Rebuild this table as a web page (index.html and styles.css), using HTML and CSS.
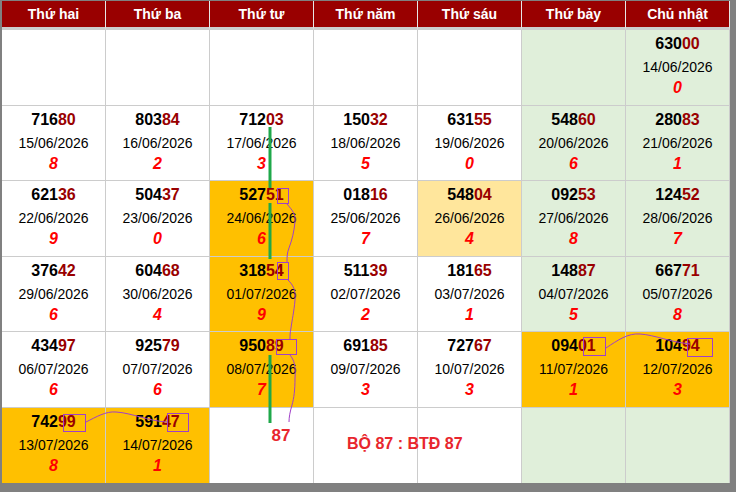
FILE: index.html
```html
<!DOCTYPE html>
<html lang="vi">
<head>
<meta charset="utf-8">
<title>Bảng kết quả</title>
<link rel="stylesheet" href="styles.css">
</head>
<body>
<div class="page">
  <div class="cal">
    <div class="hd">Thứ hai</div>
    <div class="hd">Thứ ba</div>
    <div class="hd">Thứ tư</div>
    <div class="hd">Thứ năm</div>
    <div class="hd">Thứ sáu</div>
    <div class="hd">Thứ bảy</div>
    <div class="hd">Chủ nhật</div>

    <div class="c"></div>
    <div class="c"></div>
    <div class="c"></div>
    <div class="c"></div>
    <div class="c"></div>
    <div class="c g"></div>
    <div class="c g"><div class="n">630<b>00</b></div><div class="d">14/06/2026</div><div class="k">0</div></div>

    <div class="c"><div class="n">716<b>80</b></div><div class="d">15/06/2026</div><div class="k">8</div></div>
    <div class="c"><div class="n">803<b>84</b></div><div class="d">16/06/2026</div><div class="k">2</div></div>
    <div class="c"><div class="n">712<b>03</b></div><div class="d">17/06/2026</div><div class="k">3</div></div>
    <div class="c"><div class="n">150<b>32</b></div><div class="d">18/06/2026</div><div class="k">5</div></div>
    <div class="c"><div class="n">631<b>55</b></div><div class="d">19/06/2026</div><div class="k">0</div></div>
    <div class="c g"><div class="n">548<b>60</b></div><div class="d">20/06/2026</div><div class="k">6</div></div>
    <div class="c g"><div class="n">280<b>83</b></div><div class="d">21/06/2026</div><div class="k">1</div></div>

    <div class="c"><div class="n">621<b>36</b></div><div class="d">22/06/2026</div><div class="k">9</div></div>
    <div class="c"><div class="n">504<b>37</b></div><div class="d">23/06/2026</div><div class="k">0</div></div>
    <div class="c o"><div class="n">527<b>51</b></div><div class="d">24/06/2026</div><div class="k">6</div></div>
    <div class="c"><div class="n">018<b>16</b></div><div class="d">25/06/2026</div><div class="k">7</div></div>
    <div class="c y"><div class="n">548<b>04</b></div><div class="d">26/06/2026</div><div class="k">4</div></div>
    <div class="c g"><div class="n">092<b>53</b></div><div class="d">27/06/2026</div><div class="k">8</div></div>
    <div class="c g"><div class="n">124<b>52</b></div><div class="d">28/06/2026</div><div class="k">7</div></div>

    <div class="c"><div class="n">376<b>42</b></div><div class="d">29/06/2026</div><div class="k">6</div></div>
    <div class="c"><div class="n">604<b>68</b></div><div class="d">30/06/2026</div><div class="k">4</div></div>
    <div class="c o"><div class="n">318<b>54</b></div><div class="d">01/07/2026</div><div class="k">9</div></div>
    <div class="c"><div class="n">511<b>39</b></div><div class="d">02/07/2026</div><div class="k">2</div></div>
    <div class="c"><div class="n">181<b>65</b></div><div class="d">03/07/2026</div><div class="k">1</div></div>
    <div class="c g"><div class="n">148<b>87</b></div><div class="d">04/07/2026</div><div class="k">5</div></div>
    <div class="c g"><div class="n">667<b>71</b></div><div class="d">05/07/2026</div><div class="k">8</div></div>

    <div class="c"><div class="n">434<b>97</b></div><div class="d">06/07/2026</div><div class="k">6</div></div>
    <div class="c"><div class="n">925<b>79</b></div><div class="d">07/07/2026</div><div class="k">6</div></div>
    <div class="c o"><div class="n">950<b>89</b></div><div class="d">08/07/2026</div><div class="k">7</div></div>
    <div class="c"><div class="n">691<b>85</b></div><div class="d">09/07/2026</div><div class="k">3</div></div>
    <div class="c"><div class="n">727<b>67</b></div><div class="d">10/07/2026</div><div class="k">3</div></div>
    <div class="c o"><div class="n">094<b>01</b></div><div class="d">11/07/2026</div><div class="k">1</div></div>
    <div class="c o"><div class="n">104<b>94</b></div><div class="d">12/07/2026</div><div class="k">3</div></div>

    <div class="c o last"><div class="n">742<b>99</b></div><div class="d">13/07/2026</div><div class="k">8</div></div>
    <div class="c o last"><div class="n">591<b>47</b></div><div class="d">14/07/2026</div><div class="k">1</div></div>
    <div class="c last"></div>
    <div class="c last"></div>
    <div class="c last"></div>
    <div class="c g last"></div>
    <div class="c g last"></div>
  </div>

  <svg class="marks" width="736" height="492" viewBox="0 0 736 492" xmlns="http://www.w3.org/2000/svg">
    <g stroke="#1fa84a" stroke-width="3" fill="none">
      <line x1="270" y1="127" x2="270" y2="188"/>
      <line x1="270" y1="203" x2="270" y2="259"/>
      <line x1="270" y1="355" x2="270" y2="423"/>
    </g>
    <g stroke="#a040c8" stroke-width="1" fill="none">
      <rect x="277.5" y="188.5" width="11" height="15"/>
      <rect x="277.5" y="262.5" width="11" height="17"/>
      <rect x="276.5" y="339.5" width="20" height="15"/>
      <rect x="583.5" y="337.5" width="22" height="18"/>
      <rect x="687.5" y="338.5" width="25" height="18"/>
      <rect x="63.5" y="414.5" width="22" height="17"/>
      <rect x="167.5" y="413.5" width="21" height="18"/>
      <path d="M287 204 C292 210 296 214 295 222 C294 232 292 240 289 248 C287 253 287 257 287 262"/>
      <path d="M288 280 C293 285 296 290 295 300 C294 312 292 320 291 328 C290 333 290 336 290 339"/>
      <path d="M290 355 C294 360 296 366 295 378 C295 390 294 398 292 405 C290 412 289 417 289 422"/>
      <path d="M606 348 C618 340 628 333 640 334 C655 335 670 342 690 344"/>
      <path d="M86 422 C96 417 106 411 116 412 C132 413 148 421 167 422"/>
    </g>
    <text class="note n87" x="281" y="441" text-anchor="middle">87</text>
    <text class="note" x="347" y="449">BỘ 87 : BTĐ 87</text>
  </svg>
</div>
</body>
</html>
```
FILE: styles.css
```css
html, body {
  margin: 0;
  padding: 0;
}
body {
  background: #808080;
  width: 736px;
  height: 492px;
  overflow: hidden;
  font-family: "Liberation Sans", Arial, sans-serif;
}
.page {
  position: relative;
  width: 736px;
  height: 492px;
  padding: 1px 0 0 2px;
  box-sizing: border-box;
}
.cal {
  display: grid;
  grid-template-columns: repeat(7, 104px);
  grid-template-rows: 29px 76px 75px 76px 75px 76px 75px;
  width: 728px;
  background: #ffffff;
}
.hd {
  background: #990000;
  color: #ffffff;
  font-weight: bold;
  font-size: 14px;
  line-height: 25px;
  padding-top: 1px;
  text-align: center;
  border-right: 1px solid #e6e6e6;
  border-bottom: 3px solid #cccccc;
}
.c {
  background: #ffffff;
  border-right: 1px solid #cccccc;
  border-bottom: 1px solid #cccccc;
  text-align: center;
  padding-top: 4px;
  box-sizing: border-box;
}
.c.last {
  border-bottom: 0;
}
.c.g { background: #e0efda; }
.c.o { background: #ffc000; }
.c.y { background: #ffe69c; }
.n {
  font-size: 16px;
  font-weight: bold;
  line-height: 20px;
  color: #000000;
}
.n b {
  color: #990000;
}
.d {
  font-size: 14px;
  line-height: 26px;
  color: #000000;
}
.k {
  font-size: 16px;
  line-height: 16px;
  font-weight: bold;
  font-style: italic;
  color: #ff0000;
}
.marks {
  position: absolute;
  left: 0;
  top: 0;
  pointer-events: none;
}
.note {
  font-family: "Liberation Sans", Arial, sans-serif;
  font-weight: bold;
  font-size: 16px;
  fill: #e8262d;
}
.note.n87 {
  font-size: 17px;
}
```
